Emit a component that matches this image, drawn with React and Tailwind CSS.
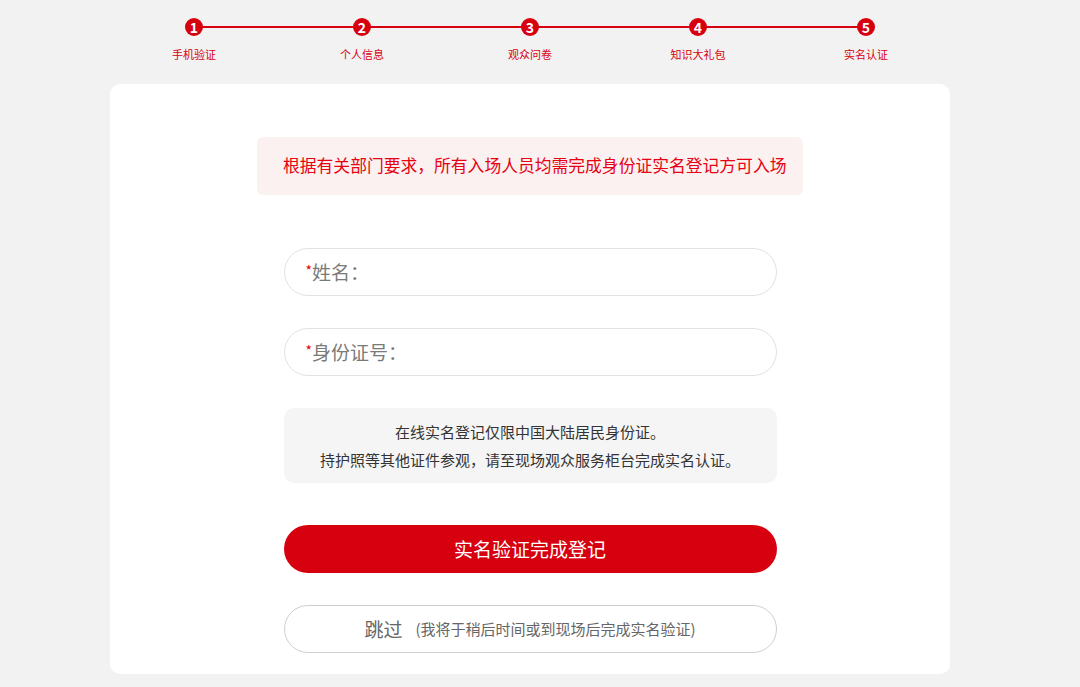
const steps = ["手机验证", "个人信息", "观众问卷", "知识大礼包", "实名认证"];

function Stepper() {
  return (
    <div className="relative ml-[110px] grid w-[840px] grid-cols-5 pt-[18px]">
      <div className="absolute left-[84px] right-[84px] top-[26px] h-[2px] bg-[#d7000f]" />
      {steps.map((label, i) => (
        <div key={label} className="relative flex flex-col items-center">
          <div className="flex h-[18px] w-[18px] items-center justify-center rounded-full bg-[#d7000f] text-[14px] font-bold leading-none text-white">
            {i + 1}
          </div>
          <div className="mt-[11px] text-[11px] leading-[14px] text-[#d7000f]">
            {label}
          </div>
        </div>
      ))}
    </div>
  );
}

function Field({ label }) {
  return (
    <div className="flex h-[48px] w-[493px] items-center rounded-full border border-[#e2e2e2] bg-white pl-[21px]">
      <span className="mb-[4px] text-[14px] text-[#e60012]">*</span>
      <span className="text-[19px] text-[#7a7a7a]">{label}</span>
    </div>
  );
}

export default function App() {
  return (
    <div
      className="min-h-[687px] w-full bg-[#f2f2f2]"
      style={{ fontFamily: '"Microsoft YaHei", "Noto Sans CJK SC", sans-serif' }}
    >
      <Stepper />
      <div className="ml-[110px] mt-[23px] flex h-[590px] w-[840px] flex-col items-center rounded-[10px] bg-white pt-[53px]">
        <div className="flex h-[58px] w-[546px] items-center rounded-[6px] bg-[#fbf1f0] pl-[26px] text-[16.8px] text-[#e60012]">
          根据有关部门要求，所有入场人员均需完成身份证实名登记方可入场
        </div>
        <div className="mt-[53px] flex flex-col gap-[32px]">
          <Field label="姓名：" />
          <Field label="身份证号：" />
        </div>
        <div className="mt-[32px] flex h-[75px] w-[493px] flex-col items-center justify-center rounded-[10px] bg-[#f5f5f5] text-[15px] leading-[28px] text-[#333]">
          <div>在线实名登记仅限中国大陆居民身份证。</div>
          <div>持护照等其他证件参观，请至现场观众服务柜台完成实名认证。</div>
        </div>
        <button
          type="button"
          className="mt-[42px] flex h-[48px] w-[493px] items-center justify-center rounded-full bg-[#d7000f] text-[19px] text-white"
        >
          实名验证完成登记
        </button>
        <button
          type="button"
          className="mt-[32px] flex h-[48px] w-[493px] items-center justify-center rounded-full border border-[#cfcfcf] bg-white"
        >
          <span className="text-[19px] text-[#666]">跳过</span>
          <span className="ml-[13px] text-[15px] text-[#666]">
            (我将于稍后时间或到现场后完成实名验证)
          </span>
        </button>
      </div>
    </div>
  );
}
